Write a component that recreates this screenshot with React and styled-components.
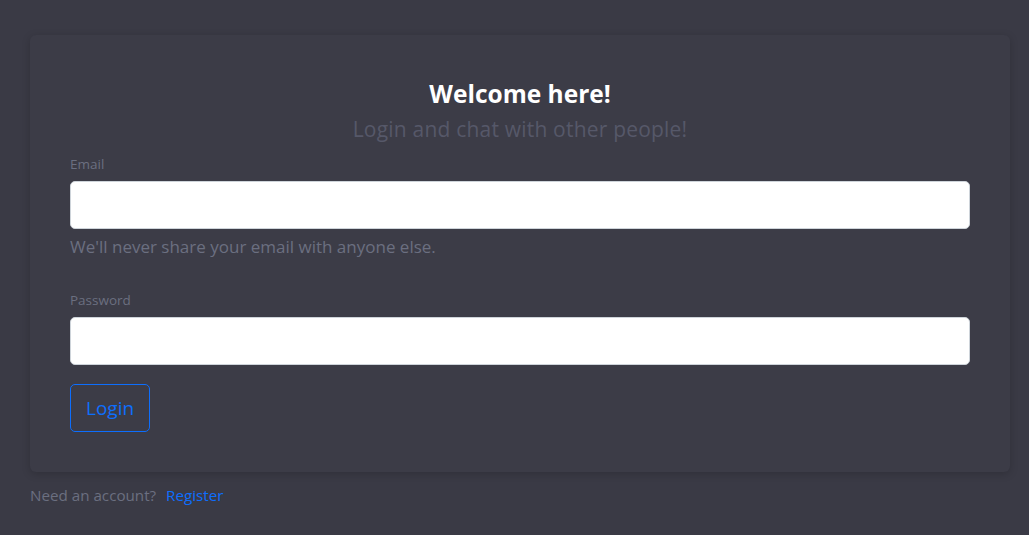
import React from 'react'
import styled, { createGlobalStyle } from 'styled-components'

const Global = createGlobalStyle`
  html, body {
    margin: 0;
    padding: 0;
    background-color: #3a3a45;
    font-family: "Open Sans", "Noto Sans", "Liberation Sans", sans-serif;
  }
  * { box-sizing: border-box; }
`

const Page = styled.div`
  padding: 35px 19px 0 30px;
  min-height: 535px;
`

const Card = styled.form`
  background-color: #3c3c47;
  border-radius: 6px;
  box-shadow: 0 2px 8px rgba(0, 0, 0, 0.18);
  padding: 44px 40px 40px;
  display: flex;
  flex-direction: column;
`

const Title = styled.h2`
  margin: 0;
  text-align: center;
  color: #ffffff;
  font-size: 24.5px;
  font-weight: 700;
  line-height: 30px;
`

const Subtitle = styled.p`
  margin: 5px 0 10px;
  text-align: center;
  color: #565869;
  font-size: 21px;
  line-height: 30px;
  letter-spacing: 0.2px;
`

const Label = styled.label`
  display: block;
  color: #6b6f80;
  font-size: 13.5px;
  line-height: 21px;
  margin-bottom: 6px;
`

const Input = styled.input`
  display: block;
  width: 100%;
  height: 48px;
  border: 1px solid #ced4da;
  border-radius: 5px;
  background: #ffffff;
  padding: 8px 16px;
  font-size: 20px;
  outline: none;
`

const Help = styled.div`
  margin-top: 6px;
  color: #6b6f80;
  font-size: 17px;
  line-height: 24px;
`

const Field = styled.div`
  margin-bottom: ${p => p.$mb || 16}px;
`

const Button = styled.button`
  align-self: flex-start;
  margin-top: 3px;
  height: 48px;
  padding: 0 15px;
  border: 1px solid #0d6efd;
  border-radius: 5px;
  background: transparent;
  color: #0d6efd;
  font-family: inherit;
  font-size: 19px;
  cursor: pointer;
`

const Footer = styled.p`
  margin: 12px 0 0;
  color: #6b6f80;
  font-size: 15.2px;
  line-height: 22px;
  a {
    color: #0d6efd;
    text-decoration: none;
    margin-left: 6px;
  }
`

const App = () => {
  return (
    <Page>
      <Global />
      <Card onSubmit={e => e.preventDefault()}>
        <Title>Welcome here!</Title>
        <Subtitle>Login and chat with other people!</Subtitle>
        <Field $mb={31}>
          <Label>Email</Label>
          <Input type="email" />
          <Help>We'll never share your email with anyone else.</Help>
        </Field>
        <Field>
          <Label>Password</Label>
          <Input type="password" />
        </Field>
        <Button type="submit">Login</Button>
      </Card>
      <Footer>
        Need an account? <a href="#">Register</a>
      </Footer>
    </Page>
  )
}

export default App
